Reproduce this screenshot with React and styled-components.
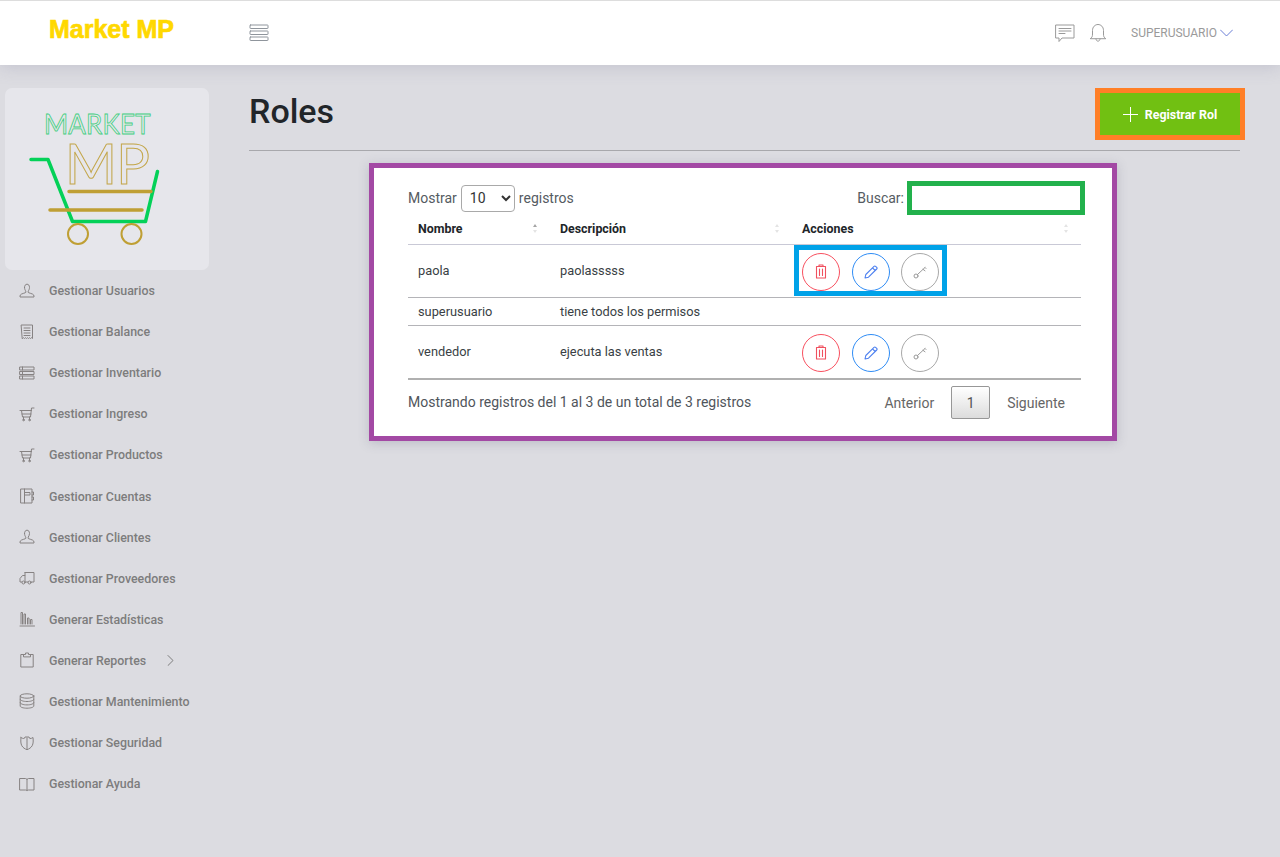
import React from 'react';
import styled, { createGlobalStyle } from 'styled-components';

const GlobalStyle = createGlobalStyle`
  html, body {
    margin: 0;
    padding: 0;
    height: 100%;
    overflow: hidden;
    background: #dcdce1;
    font-family: Roboto, "Liberation Sans", sans-serif;
  }
  * { box-sizing: border-box; }
`;

const Page = styled.div`
  height: 857px;
  display: flex;
  flex-direction: column;
`;

const Header = styled.header`
  height: 65px;
  flex: none;
  display: flex;
  align-items: center;
  background: #fff;
  border-top: 1px solid #dddddd;
  box-shadow: 0 2px 16px rgba(120, 120, 150, 0.25);
  position: relative;
  z-index: 2;
`;

const Brand = styled.div`
  width: 249px;
  padding: 0 0 8px 49px;
  font-family: "Liberation Sans Narrow", "Liberation Sans", sans-serif;
  font-size: 25px;
  line-height: 40px;
  font-weight: 700;
  color: #ffd800;
  -webkit-text-stroke: 0.7px #ffd800;
`;

const MenuButton = styled.div`
  display: flex;
  color: #8f959c;
`;

const HeaderRight = styled.div`
  margin-left: auto;
  display: flex;
  align-items: center;
  padding-right: 47px;
  color: #9a9a9a;
`;

const UserName = styled.span`
  margin-left: 24px;
  font-size: 12px;
  line-height: 16px;
`;

const Body = styled.div`
  flex: 1;
  display: flex;
  min-height: 0;
`;

const Sidebar = styled.aside`
  width: 249px;
  flex: none;
  padding: 23px 0 0 5px;
`;

const LogoCard = styled.div`
  width: 204px;
  height: 182px;
  background: #e6e6eb;
  border-radius: 7px;
  display: flex;
`;

const NavList = styled.nav`
  display: flex;
  flex-direction: column;
  margin-left: -5px;
`;

const NavItem = styled.div`
  height: 41.1px;
  display: flex;
  align-items: center;
  padding-left: 19px;
  color: #7d7d7d;
  font-size: 12.4px;
  font-weight: 500;
`;

const NavIcon = styled.span`
  width: 30px;
  flex: none;
  display: flex;
  color: #868282;
`;

const NavArrow = styled.span`
  display: flex;
  margin-left: 21px;
  color: #7d7d7d;
`;

const Main = styled.main`
  flex: 1;
  padding: 23px 40px 0 0;
  min-width: 0;
`;

const TitleRow = styled.div`
  height: 63px;
  display: flex;
  justify-content: space-between;
  align-items: flex-start;
  border-bottom: 1px solid #a8a8ac;
`;

const Title = styled.h1`
  margin: 3px 0 0;
  font-size: 34px;
  line-height: 40px;
  font-weight: 500;
  color: #212529;
`;

const AddButton = styled.button`
  width: 150px;
  height: 52px;
  margin-right: -5px;
  display: flex;
  align-items: center;
  justify-content: center;
  gap: 7px;
  border: 5px solid #ff7f27;
  background: #71c012;
  color: #fff;
  font-family: Roboto, sans-serif;
  font-size: 12.4px;
  font-weight: 700;
`;

const Card = styled.section`
  width: 748px;
  height: 278px;
  margin: 12px 0 0 120px;
  padding: 16px 31px 0 34px;
  background: #fff;
  border: 5px solid #a349a4;
  box-shadow: 0 2px 10px rgba(90, 90, 120, 0.25);
`;

const Controls = styled.div`
  display: flex;
  justify-content: space-between;
  align-items: center;
  height: 28px;
  color: #555b62;
  font-size: 14px;
`;

const LengthLabel = styled.label`
  display: flex;
  align-items: center;
  gap: 4px;
`;

const LengthSelect = styled.select`
  width: 54px;
  height: 27px;
  padding: 0 4px;
  border: 1px solid #a9a9a9;
  border-radius: 4px;
  background: #fff;
  color: #333;
  font-family: Roboto, sans-serif;
  font-size: 14px;
`;

const SearchLabel = styled.label`
  display: flex;
  align-items: center;
  gap: 3px;
  margin: 0 -4px 0 0;
`;

const SearchInput = styled.input`
  width: 178px;
  height: 34px;
  border: 5px solid #22b14c;
  background: #fff;
  outline: none;
`;

const Table = styled.table`
  width: 673px;
  table-layout: fixed;
  border-collapse: collapse;
  margin-top: 1px;
  font-size: 12.8px;
  color: #3a3f45;
`;

const Th = styled.th`
  position: relative;
  width: ${p => p.$w}px;
  height: 31px;
  padding: 0 10px;
  text-align: left;
  font-size: 12.4px;
  font-weight: 700;
  color: #212529;
  border-bottom: 1px solid #c9c9d6;
`;

const SortArrows = styled.span`
  position: absolute;
  right: 13px;
  top: 11px;
  display: flex;
  flex-direction: column;
  gap: 3px;
  &::before, &::after {
    content: '';
    border-left: 2.5px solid transparent;
    border-right: 2.5px solid transparent;
  }
  &::before {
    border-bottom: 3px solid ${p => (p.$active ? '#a5a5a5' : '#e4e4e4')};
  }
  &::after {
    border-top: 3px solid #e4e4e4;
  }
`;

const Td = styled.td`
  height: ${p => p.$h}px;
  padding: 0 10px;
  border-bottom: ${p => (p.$last ? '2px solid #b0b0b0' : '1px solid #b4b4b8')};
`;

const Actions = styled.div`
  display: flex;
  gap: 11.5px;
  width: fit-content;
  margin-left: -8px;
  padding: 3px 3px 0 3px;
  height: 51px;
  margin-top: -1px;
  border: ${p => (p.$marked ? '5px solid #00a2e8' : '5px solid transparent')};
`;

const RoundButton = styled.span`
  width: 38px;
  height: 38px;
  flex: none;
  display: flex;
  align-items: center;
  justify-content: center;
  border: 1px solid ${p => p.$color};
  border-radius: 50%;
  color: ${p => p.$icon};
`;

const Footer = styled.div`
  display: flex;
  justify-content: space-between;
  align-items: center;
  height: 44px;
  margin-top: 0;
  width: 673px;
  color: #50555b;
  font-size: 14px;
`;

const Pager = styled.div`
  display: flex;
  align-items: center;
  gap: 17px;
  padding: 0 16px 0 0;
  margin-top: 1px;
  color: #666;
`;

const PageNumber = styled.span`
  width: 39px;
  height: 33px;
  display: flex;
  align-items: center;
  justify-content: center;
  border: 1px solid #979797;
  border-radius: 2px;
  background: linear-gradient(#fff, #dcdcdc);
  color: #555;
`;

const Svg = ({ size = 16, w, h, view, sw = 1, children }) => (
  <svg
    width={w || size}
    height={h || size}
    viewBox={view || '0 0 16 16'}
    fill="none"
    stroke="currentColor"
    strokeWidth={sw}
    strokeLinecap="round"
    strokeLinejoin="round"
  >
    {children}
  </svg>
);

const navIcons = {
  user: <Svg><path d="M5.5 4.5C5.5 2.5 6.5 1.2 8 1.2s2.5 1.3 2.5 3.3c0 1.6-.8 2.9-1.3 3.6v1.3c0 .5 4.9 1.3 5.5 2.6.3.7.3 1.6.3 2H1c0-.4 0-1.300.3-2 .6-1.300 5.500-2.100 5.500-2.600V8.100C6.300 7.400 5.500 6.100 5.500 4.500z" /></Svg>,
  receipt: <Svg><path d="M2.500 1h11v13.500l-1-.8-1 .8-1-.8-1 .8-1-.8-1 .8-1-.8-1 .8-1-.8-1 .8zM5 4h6M5 6.500h6M5 9h6M5 11.500h6" /></Svg>,
  list: <Svg><path d="M1 2h14v3H1zM1 6.500h14v3H1zM1 11h14v3H1zM3.500 2v3M3.500 6.500v3M3.500 11v3" /></Svg>,
  cart: <Svg><path d="M1 4.500h11.500M15 2h-2.500l-1 9H3.500L2.500 4.500M3 8h9M4.500 11v2.500M10.500 11v2.500" /><circle cx="4.500" cy="14" r=".8" /><circle cx="10.500" cy="14" r=".8" /></Svg>,
  book: <Svg><path d="M2 1h11v14H2zM5.500 1v14M5.500 4.500H11V7H5.500M13 4h1.500v3H13M13 9h1.500v3H13" /></Svg>,
  truck: <Svg><path d="M6 2.500h9v9.500h-3M6 2.500v3H3.500L1 8.500V12h2M6 5.500V12M6.500 12h2.500" /><circle cx="4.500" cy="12.500" r="1.500" /><circle cx="10.500" cy="12.500" r="1.500" /></Svg>,
  chart: <Svg><path d="M1 15h14.500M2 13V1.500h1.500V13M5 13V3h1.500v10M8.500 13V7H10v6M11.500 13V8.500H13V13" /></Svg>,
  clipboard: <Svg><path d="M4.500 2.500H1.800v12.500h12.400V2.500h-2.700M4.500 4.500V2.500H6.500V1h3v1.500h2v2z" /></Svg>,
  database: <Svg><ellipse cx="8" cy="3" rx="6.800" ry="2.200" /><path d="M1.200 3v10c0 1.200 3 2.200 6.800 2.200s6.800-1 6.800-2.200V3M1.200 6.300c0 1.200 3 2.200 6.800 2.200s6.800-1 6.800-2.200M1.200 9.700c0 1.200 3 2.200 6.800 2.200s6.800-1 6.800-2.200" /></Svg>,
  shield: <Svg><path d="M2 2.500c1 .8 2 1 3.200 1L6 2h4l.8 1.500c1.200 0 2.200-.2 3.200-1 .4 3.500.3 6-.8 8.200-1 1.900-3.200 3.300-5.200 4-2-.7-4.200-2.100-5.200-4C1.700 8.500 1.600 6 2 2.500zM8 3v11" /></Svg>,
  open: <Svg><path d="M1 2.500h5.500c.8 0 1.500.5 1.500 1.200 0-.7.7-1.200 1.500-1.200H15v11.500H9.500c-.8 0-1.500.3-1.500.8 0-.5-.7-.8-1.500-.8H1zM8 3.700v11" /></Svg>,
};

const menu = [
  ['Gestionar Usuarios', 'user'],
  ['Gestionar Balance', 'receipt'],
  ['Gestionar Inventario', 'list'],
  ['Gestionar Ingreso', 'cart'],
  ['Gestionar Productos', 'cart'],
  ['Gestionar Cuentas', 'book'],
  ['Gestionar Clientes', 'user'],
  ['Gestionar Proveedores', 'truck'],
  ['Generar Estadísticas', 'chart'],
  ['Generar Reportes', 'clipboard', true],
  ['Gestionar Mantenimiento', 'database'],
  ['Gestionar Seguridad', 'shield'],
  ['Gestionar Ayuda', 'open'],
];

const Logo = () => (
  <svg width="204" height="182" viewBox="0 0 204 182" fill="none">
    <text x="39" y="46" fontFamily="Lato, sans-serif" fontSize="26" letterSpacing="0.5" fill="none" stroke="#3fcf80" strokeWidth="0.8" textLength="107">MARKET</text>
    <text x="60" y="96" fontFamily="Lato, sans-serif" fontSize="56" fill="none" stroke="#c3a64a" strokeWidth="1" textLength="85">MP</text>
    <path d="M26 71.500h17l24.500 62h73l12-50" stroke="#04d158" strokeWidth="3.500" strokeLinecap="round" strokeLinejoin="round" />
    <path d="M64 103.500h82M45 122h92" stroke="#bf9f34" strokeWidth="3.500" strokeLinecap="round" />
    <circle cx="73" cy="146" r="10" stroke="#bf9f34" strokeWidth="2" />
    <circle cx="126.500" cy="146" r="10" stroke="#bf9f34" strokeWidth="2" />
  </svg>
);

const Trash = () => (
  <Svg w={12} h={15} view="0 0 12 15" sw={1.100}>
    <path d="M1.500 2.500h9V14h-9zM4 2.500V1h4v1.500M4.500 5v6.500M7.500 5v6.500" />
  </Svg>
);

const Pen = () => (
  <Svg w={14} h={14} view="0 0 14 14" sw={1.100}>
    <path d="M1 13l.8-3.500L8.500 2.800l2.700 2.700-6.700 6.700zM8.500 2.800l1.500-1.500c.5-.5 1.100-.5 1.600 0l1.100 1.100c.5.500.5 1.100 0 1.600l-1.500 1.500" />
  </Svg>
);

const Key = () => (
  <Svg w={14} h={14} view="0 0 14 14" sw={1}>
    <circle cx="3" cy="11" r="2" />
    <path d="M4.500 9.500L12 2.500M10 4.300l2 1.500M12 2.500l1 1" />
  </Svg>
);

const ActionButtons = ({ marked }) => (
  <Actions $marked={marked}>
    <RoundButton $color="#f8505f" $icon="#f0505f"><Trash /></RoundButton>
    <RoundButton $color="#2f8cf5" $icon="#4d80f0"><Pen /></RoundButton>
    <RoundButton $color="#a8a8a8" $icon="#9a9a9a"><Key /></RoundButton>
  </Actions>
);

export default function App() {
  return (
    <Page>
      <GlobalStyle />
      <Header>
        <Brand>Market MP</Brand>
        <MenuButton>
          <Svg w={20} h={18} view="0 0 20 18" sw={1}>
            <rect x="1" y="1" width="18" height="3.500" rx="0.500" />
            <rect x="1" y="7" width="18" height="3.500" rx="0.500" />
            <rect x="1" y="13" width="18" height="3.500" rx="0.500" />
          </Svg>
        </MenuButton>
        <HeaderRight>
          <Svg w={20} h={20} view="0 0 20 20" sw={1}>
            <path d="M1 2h18v13H7l-3 3.500V15H1zM4 5.500h12M4 8h12M4 10.500h6" />
          </Svg>
          <span style={{ width: 14 }} />
          <Svg w={18} h={20} view="0 0 18 20" sw={1}>
            <path d="M1.500 15.500c1.500-1 2-2 2-4.500V7.500C3.500 4 6 1.500 9 1.500s5.500 2.500 5.500 6V11c0 2.500.5 3.500 2 4.500zM7 16c0 3 4 3 4 0" />
          </Svg>
          <UserName>SUPERUSUARIO</UserName>
          <span style={{ display: 'flex', marginLeft: 3, color: '#6a7fd6' }}>
            <Svg w={13} h={8} view="0 0 13 8" sw={1}>
              <path d="M.5 1l6 6 6-6" />
            </Svg>
          </span>
        </HeaderRight>
      </Header>
      <Body>
        <Sidebar>
          <LogoCard><Logo /></LogoCard>
          <NavList>
            {menu.map(([label, icon, more]) => (
              <NavItem key={label}>
                <NavIcon>{navIcons[icon]}</NavIcon>
                {label}
                {more && (
                  <NavArrow>
                    <Svg w={7} h={11} view="0 0 7 11" sw={1}><path d="M1 .5l5 5-5 5" /></Svg>
                  </NavArrow>
                )}
              </NavItem>
            ))}
          </NavList>
        </Sidebar>
        <Main>
          <TitleRow>
            <Title>Roles</Title>
            <AddButton>
              <Svg w={15} h={15} view="0 0 15 15" sw={1}><path d="M7.500 0v15M0 7.500h15" /></Svg>
              Registrar Rol
            </AddButton>
          </TitleRow>
          <Card>
            <Controls>
              <LengthLabel>
                Mostrar
                <LengthSelect defaultValue="10">
                  <option>10</option>
                  <option>25</option>
                  <option>50</option>
                </LengthSelect>
                registros
              </LengthLabel>
              <SearchLabel>
                Buscar:
                <SearchInput />
              </SearchLabel>
            </Controls>
            <Table>
              <thead>
                <tr>
                  <Th $w={142}>Nombre<SortArrows $active /></Th>
                  <Th $w={242}>Descripción<SortArrows /></Th>
                  <Th $w={289}>Acciones<SortArrows /></Th>
                </tr>
              </thead>
              <tbody>
                <tr>
                  <Td $h={53}>paola</Td>
                  <Td $h={53}>paolasssss</Td>
                  <Td $h={53}><ActionButtons marked /></Td>
                </tr>
                <tr>
                  <Td $h={28}>superusuario</Td>
                  <Td $h={28}>tiene todos los permisos</Td>
                  <Td $h={28} />
                </tr>
                <tr>
                  <Td $h={54} $last>vendedor</Td>
                  <Td $h={54} $last>ejecuta las ventas</Td>
                  <Td $h={54} $last><ActionButtons /></Td>
                </tr>
              </tbody>
            </Table>
            <Footer>
              <span>Mostrando registros del 1 al 3 de un total de 3 registros</span>
              <Pager>
                <span>Anterior</span>
                <PageNumber>1</PageNumber>
                <span>Siguiente</span>
              </Pager>
            </Footer>
          </Card>
        </Main>
      </Body>
    </Page>
  );
}
